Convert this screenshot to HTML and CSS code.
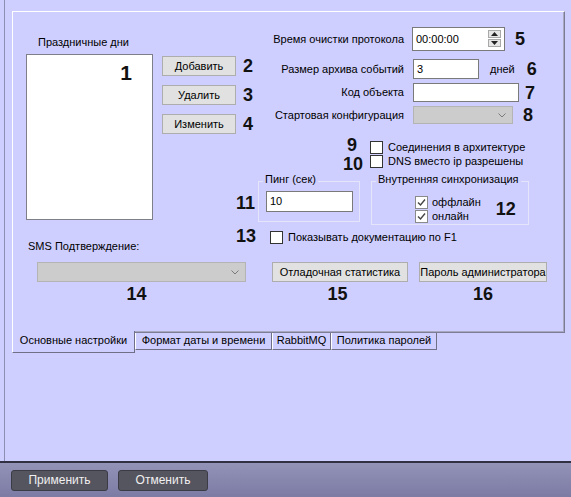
FILE: index.html
```html
<!DOCTYPE html>
<html lang="ru">
<head>
<meta charset="utf-8">
<link rel="stylesheet" href="styles.css">
</head>
<body>
<div class="app">
  <div class="workspace">
    <div class="frame">
      <div class="panel">
        <div class="top">
          <div class="left">
            <div class="caption">Праздничные дни</div>
            <div class="holidays">
              <div class="listbox"><span class="num num-big">1</span></div>
              <div class="btncol">
                <div class="btnrow"><div class="btn btn-small">Добавить</div><span class="num num-side">2</span></div>
                <div class="btnrow"><div class="btn btn-small">Удалить</div><span class="num num-side">3</span></div>
                <div class="btnrow"><div class="btn btn-small">Изменить</div><span class="num num-side">4</span></div>
              </div>
            </div>
            <div class="sms">SMS Подтверждение:</div>
          </div>
          <div class="right">
            <div class="frow frow-1">
              <div class="flabel">Время очистки протокола</div>
              <div class="edit edit-time">00:00:00
                <div class="spin">
                  <div class="spin-btn"><svg width="7" height="4" viewBox="0 0 7 4"><polygon points="0,4 3.5,0 7,4" fill="#222"/></svg></div>
                  <div class="spin-btn"><svg width="7" height="4" viewBox="0 0 7 4"><polygon points="0,0 3.5,4 7,0" fill="#222"/></svg></div>
                </div>
              </div>
              <span class="num num-5">5</span>
            </div>
            <div class="frow frow-2">
              <div class="flabel">Размер архива событий</div>
              <div class="edit edit-days">3</div>
              <span class="days">дней</span>
              <span class="num num-6">6</span>
            </div>
            <div class="frow frow-3">
              <div class="flabel">Код объекта</div>
              <div class="edit edit-code"></div>
              <span class="num num-7">7</span>
            </div>
            <div class="frow frow-4">
              <div class="flabel">Стартовая конфигурация</div>
              <div class="combo combo-start"><svg width="8" height="5" viewBox="0 0 8 5"><polyline points="0.5,0.5 4,4 7.5,0.5" fill="none" stroke="#7a7a7a" stroke-width="1"/></svg></div>
              <span class="num num-8">8</span>
            </div>
            <div class="cbrow cbrow-9">
              <span class="num num-9">9</span>
              <span class="cb"></span><span class="cbtext">Соединения в архитектуре</span>
            </div>
            <div class="cbrow cbrow-10">
              <span class="num num-10">10</span>
              <span class="cb"></span><span class="cbtext">DNS вместо ip разрешены</span>
            </div>
            <div class="groups">
              <span class="num num-11">11</span>
              <div class="group group-ping">
                <span class="legend">Пинг (сек)</span>
                <div class="edit edit-ping">10</div>
              </div>
              <div class="group group-sync">
                <span class="legend">Внутренняя синхронизация</span>
                <div class="checks">
                  <div class="check"><span class="cb cb-on"><svg width="11" height="11" viewBox="0 0 11 11"><polyline points="2,5.5 4.5,8 9,2.5" fill="none" stroke="#444" stroke-width="1.4"/></svg></span><span class="cbtext">оффлайн</span></div>
                  <div class="check"><span class="cb cb-on"><svg width="11" height="11" viewBox="0 0 11 11"><polyline points="2,5.5 4.5,8 9,2.5" fill="none" stroke="#444" stroke-width="1.4"/></svg></span><span class="cbtext">онлайн</span></div>
                </div>
                <span class="num num-12">12</span>
              </div>
            </div>
            <div class="cbrow cbrow-13">
              <span class="num num-13">13</span>
              <span class="cb"></span><span class="cbtext">Показывать документацию по F1</span>
            </div>
          </div>
        </div>
        <div class="bottom-row">
          <div class="cell cell-sms">
            <div class="combo combo-sms"><svg width="8" height="5" viewBox="0 0 8 5"><polyline points="0.5,0.5 4,4 7.5,0.5" fill="none" stroke="#7a7a7a" stroke-width="1"/></svg></div>
            <span class="num num-14">14</span>
          </div>
          <div class="cell cell-debug">
            <div class="btn btn-wide">Отладочная статистика</div>
            <span class="num num-15">15</span>
          </div>
          <div class="cell cell-pass">
            <div class="btn btn-wide">Пароль администратора</div>
            <span class="num">16</span>
          </div>
        </div>
      </div>
      <div class="tabs">
        <div class="tab tab-active tab-main">Основные настройки</div>
        <div class="tab tab-date">Формат даты и времени</div>
        <div class="tab tab-rabbit">RabbitMQ</div>
        <div class="tab tab-policy">Политика паролей</div>
      </div>
    </div>
  </div>
  <div class="bar">
    <div class="dark-btn dark-apply">Применить</div>
    <div class="dark-btn dark-cancel">Отменить</div>
  </div>
</div>
</body>
</html>
```

FILE: styles.css
```css
* { box-sizing: border-box; }

body {
  margin: 0;
  width: 571px;
  height: 497px;
  overflow: hidden;
  background: #cfcfff;
  font: 11px/13px "Liberation Sans", Arial, sans-serif;
  color: #000;
}

.app {
  display: flex;
  flex-direction: column;
  height: 497px;
}

.workspace {
  height: 461px;
  padding-left: 4px;
}

.frame {
  height: 100%;
  border-left: 1px solid #8e8eb2;
  padding: 11px 0 0 7px;
}

.panel {
  position: relative;
  width: 553px;
  height: 322px;
  border-top: 1px solid #ffffff;
  border-left: 1px solid #ffffff;
  border-right: 1px solid #7c7c94;
  border-bottom: 1px solid #7c7c94;
  box-shadow: inset -1px -1px 0 #a9a9c4;
}

.top {
  display: flex;
  height: 250px;
}

.left { width: 245px; }
.right { width: 305px; }

.num {
  font: bold 18px/20px "Liberation Sans", Arial, sans-serif;
  color: #111;
}

/* left column */
.caption {
  margin-top: 24px;
  padding-left: 25px;
}

.holidays {
  display: flex;
  margin-top: 5px;
  padding-left: 13px;
}

.listbox {
  position: relative;
  width: 127px;
  height: 166px;
  background: #fff;
  border: 1px solid #7f7f8a;
}

.num-big {
  position: absolute;
  top: 7px;
  right: 20px;
  font-size: 21px;
  line-height: 22px;
}

.btncol {
  display: flex;
  flex-direction: column;
  gap: 9px;
  margin-left: 9px;
  padding-top: 2px;
}

.btnrow {
  display: flex;
  align-items: center;
}

.btn {
  height: 20px;
  background: #e1e1e1;
  border: 1px solid #adadad;
  line-height: 18px;
  text-align: center;
  white-space: nowrap;
}

.btn-small { width: 74px; }
.btn-wide { width: 100%; }

.num-side { margin-left: 7px; }

.sms {
  margin-top: 20px;
  padding-left: 15px;
}

/* right column */
.frow {
  display: flex;
  align-items: center;
}

.flabel {
  width: 146px;
  margin-right: 8px;
  text-align: right;
  white-space: nowrap;
}

.frow-1 { margin-top: 15px; height: 24px; }
.frow-2 { margin-top: 8px; height: 20px; }
.frow-3 { margin-top: 4px; height: 19px; }
.frow-4 { margin-top: 4px; height: 18px; }

.edit {
  position: relative;
  background: #fff;
  border: 1px solid #7a7a7a;
  padding-left: 3px;
  display: flex;
  align-items: center;
}

.edit-time { width: 93px; height: 24px; }
.edit-days { width: 66px; height: 20px; }
.edit-code { width: 106px; height: 19px; }
.edit-ping { width: 87px; height: 21px; }

.frow-2 .edit, .frow-3 .edit, .frow-4 .combo { margin-left: 1px; }

.spin {
  position: absolute;
  right: 3px;
  top: 2px;
  display: flex;
  flex-direction: column;
  gap: 1px;
}

.spin-btn {
  width: 13px;
  height: 8px;
  background: #e6e6e6;
  border: 1px solid #a9a9a9;
  display: flex;
  align-items: center;
  justify-content: center;
}

.combo {
  background: #cccccc;
  border: 1px solid #b4b4b4;
  display: flex;
  align-items: center;
  justify-content: flex-end;
  padding-right: 6px;
}

.combo-start { width: 100px; height: 18px; }
.combo-sms { width: 209px; height: 20px; }

.days { margin-left: 11px; }
.num-5 { margin-left: 10px; }
.num-6 { margin-left: 12px; }
.num-7 { margin-left: 6px; }
.num-8 { margin-left: 10px; }

.cbrow {
  position: relative;
  display: flex;
  align-items: center;
  height: 13px;
  padding-left: 112px;
}

.cbrow-9 { margin-top: 17px; }
.cbrow-10 { margin-top: 1px; }
.cbrow-13 { margin-top: 6px; padding-left: 12px; }

.cb {
  width: 13px;
  height: 13px;
  background: #fff;
  border: 1px solid #333;
  flex: none;
  display: flex;
  align-items: center;
  justify-content: center;
}

.cb-on { border-color: #8a8a8a; }

.cbtext { margin-left: 5px; white-space: nowrap; }

.num-9 { position: absolute; left: 89px; top: -6px; }
.num-10 { position: absolute; left: 85px; top: -1px; }
.num-13 { position: absolute; left: -22px; top: -5px; }

.groups {
  position: relative;
  display: flex;
  margin-top: 13px;
  height: 44px;
}

.num-11 { position: absolute; left: -22px; top: 12px; }

.group {
  position: relative;
  border: 1px solid #e4e4fa;
}

.legend {
  position: absolute;
  top: -9px;
  left: 4px;
  padding: 0 2px;
  background: #cfcfff;
  white-space: nowrap;
}

.group-ping {
  width: 102px;
  height: 41px;
  padding: 9px 0 0 7px;
}

.group-sync {
  display: flex;
  width: 158px;
  height: 44px;
  margin-left: 11px;
  padding: 14px 0 0 43px;
}

.checks {
  display: flex;
  flex-direction: column;
  gap: 1px;
}

.check {
  display: flex;
  align-items: center;
  height: 13px;
}

.check .cbtext { margin-left: 4px; }

.num-12 { margin-left: 15px; margin-top: 3px; }

/* bottom row */
.bottom-row {
  display: flex;
}

.cell {
  display: flex;
  flex-direction: column;
  align-items: center;
}

.cell .num { margin-top: 2px; }

.cell-sms { width: 209px; margin-left: 24px; }
.cell-debug { width: 136px; margin-left: 26px; }
.cell-pass { width: 128px; margin-left: 11px; }

.num-14 { margin-right: 10px; }
.num-15 { margin-right: 5px; }

/* tabs */
.tabs {
  display: flex;
}

.tab {
  height: 17px;
  border-left: 1px solid #ffffff;
  border-right: 1px solid #6f6f88;
  border-bottom: 1px solid #6f6f88;
  text-align: center;
  line-height: 15px;
  white-space: nowrap;
}

.tab-active {
  position: relative;
  z-index: 1;
  height: 22px;
  margin-top: -2px;
  padding-top: 2px;
  background: #cfcfff;
}

.tab-main { width: 123px; }
.tab-date { width: 137px; }
.tab-rabbit { width: 59px; }
.tab-policy { width: 106px; }

/* bottom bar */
.bar {
  display: flex;
  height: 36px;
  border-top: 2px solid #303042;
  padding: 7px 0 0 11px;
  background: linear-gradient(#9393b8, #7b7ba4);
}

.dark-btn {
  height: 21px;
  background: #55555f;
  border: 1px solid #3b3b46;
  border-radius: 3px;
  color: #f0f0f0;
  font-size: 12px;
  line-height: 19px;
  text-align: center;
}

.dark-apply { width: 97px; }
.dark-cancel { width: 90px; margin-left: 10px; }
```
